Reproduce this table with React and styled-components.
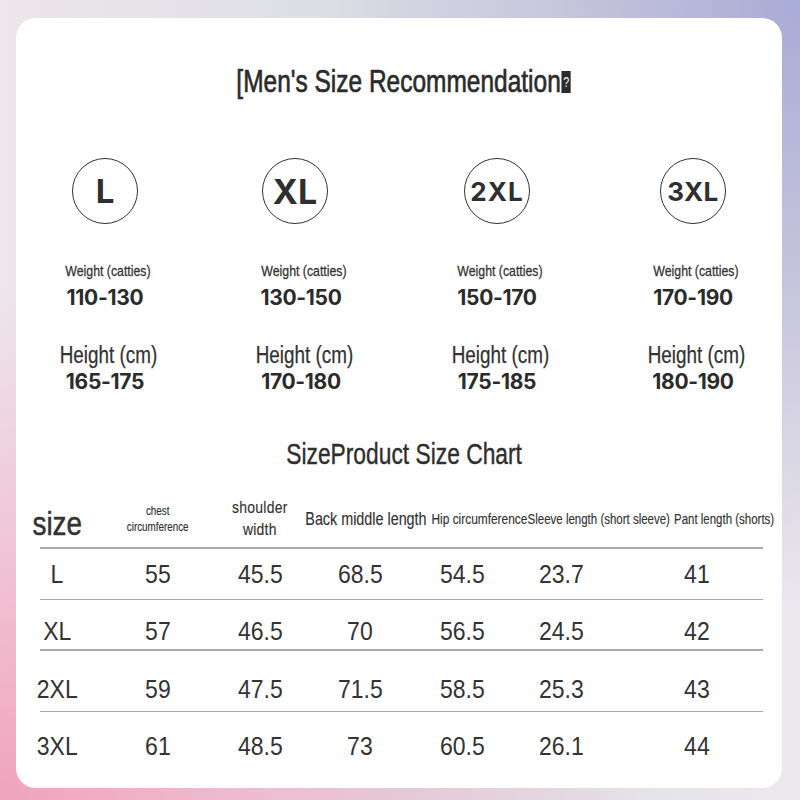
import React from "react";
import styled, { createGlobalStyle } from "styled-components";

const NARROW = `"Liberation Sans", Arial, sans-serif`;

const GlobalStyle = createGlobalStyle`
  html, body { margin: 0; padding: 0; }
  body { width: 800px; height: 800px; overflow: hidden; font-family: "Liberation Sans", Arial, sans-serif; }
`;

const Page = styled.div`
  width: 800px;
  height: 800px;
  box-sizing: border-box;
  padding: 18px 18px 12px 16px;
  background:
    radial-gradient(110% 85% at 0% 100%, #f0a3bd 0%, rgba(242, 178, 200, 0.75) 30%, rgba(242, 210, 222, 0) 75%),
    radial-gradient(70% 90% at 100% 0%, #a8abd6 0%, rgba(190, 188, 216, 0.8) 40%, rgba(215, 214, 228, 0) 85%),
    linear-gradient(90deg, #ede6eb 0%, #d9dde4 50%, #ece8ee 100%);
`;

const Card = styled.div`
  height: 100%;
  box-sizing: border-box;
  background: #fff;
  border-radius: 20px;
  padding-top: 44px;
  display: flex;
  flex-direction: column;
  align-items: center;
  color: #2f2f2f;
`;

const Title = styled.h1`
  margin: 0 0 0 10px;
  font-family: ${NARROW};
  font-weight: 400;
  font-size: 32px;
  line-height: 38px;
  color: #2b2b2b;
  white-space: nowrap;
  -webkit-text-stroke: 0.7px #2b2b2b;
  transform: scaleX(0.765);
`;

const Tofu = styled.span`
  display: inline-block;
  width: 12px;
  height: 22px;
  margin-left: 1px;
  background: #2b2b2b;
  color: #fff;
  font-size: 14px;
  line-height: 22px;
  text-align: center;
  vertical-align: 5px;
  -webkit-text-stroke: 0;
`;

const SizeGrid = styled.div`
  margin-top: 58px;
  display: grid;
  grid-template-columns: repeat(4, 196px);
`;

const SizeCol = styled.div`
  display: flex;
  flex-direction: column;
  align-items: center;
`;

const Circle = styled.div`
  width: 66px;
  height: 66px;
  box-sizing: border-box;
  margin-right: ${(p) => p.$dx || 0}px;
  border: 1.5px solid #333;
  border-radius: 50%;
  display: flex;
  align-items: center;
  justify-content: center;
  font-family: Inter, "Liberation Sans", sans-serif;
  font-weight: 700;
  font-size: ${(p) => p.$size}px;
  letter-spacing: ${(p) => p.$track}px;
  color: #2f2f2f;
`;

const SmallLabel = styled.div`
  margin-top: 38px;
  margin-left: 5px;
  font-family: ${NARROW};
  font-size: 15px;
  line-height: 18px;
  color: #353535;
  white-space: nowrap;
  -webkit-text-stroke: 0.3px #353535;
  transform: scaleX(0.82);
`;

const BigLabel = styled.div`
  margin-top: 33px;
  margin-left: 6px;
  font-family: ${NARROW};
  font-size: 23px;
  line-height: 24px;
  color: #333;
  white-space: nowrap;
  -webkit-text-stroke: 0.25px #333;
  transform: scaleX(0.82);
`;

const RangeValue = styled.div`
  margin-top: ${(p) => p.$gap}px;
  font-family: Inter, "Liberation Sans", sans-serif;
  font-weight: 700;
  font-size: 21px;
  line-height: 24px;
  letter-spacing: -0.3px;
  color: #2b2b2b;
  white-space: nowrap;
`;

const ChartTitle = styled.h2`
  margin: 43px 0 0 10px;
  font-family: ${NARROW};
  font-weight: 400;
  font-size: 30px;
  line-height: 34px;
  color: #2e2e2e;
  white-space: nowrap;
  -webkit-text-stroke: 0.4px #2e2e2e;
  transform: scaleX(0.76);
`;

const Table = styled.div`
  align-self: stretch;
  margin-top: 26px;
  display: flex;
  flex-direction: column;
`;

const HeaderRow = styled.div`
  height: 50px;
  box-sizing: border-box;
  padding-bottom: 10px;
  display: grid;
  grid-template-columns: 82px 120px 84px 128px 98px 142px 108px;
  align-items: center;
  justify-items: center;
  font-family: ${NARROW};
  color: #333;
`;

const HeadCell = styled.div`
  font-size: ${(p) => p.$size}px;
  line-height: ${(p) => p.$lh}px;
  margin-top: ${(p) => p.$shift || 0}px;
  text-align: center;
  white-space: nowrap;
  letter-spacing: ${(p) => p.$track || 0}px;
  -webkit-text-stroke: ${(p) => p.$stroke || 0.15}px #333;
  transform: scaleX(0.82);
`;

const Rule = styled.div`
  height: 1.5px;
  margin: 0 19px 0 24px;
  background: #ababab;
`;

const DataRow = styled.div`
  height: ${(p) => p.$h}px;
  box-sizing: border-box;
  padding-top: ${(p) => p.$pt}px;
  display: grid;
  grid-template-columns: 82px 120px 84px 116px 88px 110px 162px;
  align-items: center;
  justify-items: center;
  font-family: "Liberation Sans", Arial, sans-serif;
  font-size: 25px;
  line-height: 28px;
  color: #333;
`;

const Cell = styled.span`
  display: inline-block;
  transform: scaleX(0.92);
`;

const sizes = [
  { label: "L", size: 33, track: 0, dx: 0, w: "110-130", h: "165-175" },
  { label: "XL", size: 34, track: 0, dx: 12, w: "130-150", h: "170-180" },
  { label: "2XL", size: 26, track: 1, dx: 0, w: "150-170", h: "175-185" },
  { label: "3XL", size: 26, track: 0.5, dx: 0, w: "170-190", h: "180-190" },
];

const rows = [
  { h: 50, pt: 0, cells: ["L", "55", "45.5", "68.5", "54.5", "23.7", "41"] },
  { h: 49, pt: 13, cells: ["XL", "57", "46.5", "70", "56.5", "24.5", "42"] },
  { h: 60, pt: 16, cells: ["2XL", "59", "47.5", "71.5", "58.5", "25.3", "43"] },
  { h: 68, pt: 0, cells: ["3XL", "61", "48.5", "73", "60.5", "26.1", "44"] },
];

export default function App() {
  return (
    <>
      <GlobalStyle />
      <Page>
        <Card>
          <Title>
            [Men's Size Recommendation<Tofu>?</Tofu>
          </Title>
          <SizeGrid>
            {sizes.map((s) => (
              <SizeCol key={s.label}>
                <Circle $size={s.size} $track={s.track} $dx={s.dx}>{s.label}</Circle>
                <SmallLabel>Weight (catties)</SmallLabel>
                <RangeValue $gap={6}>{s.w}</RangeValue>
                <BigLabel>Height (cm)</BigLabel>
                <RangeValue $gap={3}>{s.h}</RangeValue>
              </SizeCol>
            ))}
          </SizeGrid>
          <ChartTitle>SizeProduct Size Chart</ChartTitle>
          <Table>
            <HeaderRow>
              <HeadCell $size={34} $lh={36} $shift={8} $stroke={0.5}>size</HeadCell>
              <HeadCell $size={12} $lh={16}>chest<br />circumference</HeadCell>
              <HeadCell $size={17} $lh={22} $track={0.3}>shoulder<br />width</HeadCell>
              <HeadCell $size={17.5} $lh={20}>Back middle length</HeadCell>
              <HeadCell $size={14.5} $lh={18}>Hip circumference</HeadCell>
              <HeadCell $size={14} $lh={18}>Sleeve length (short sleeve)</HeadCell>
              <HeadCell $size={14} $lh={18}>Pant length (shorts)</HeadCell>
            </HeaderRow>
            {rows.map((r) => (
              <React.Fragment key={r.cells[0]}>
                <Rule />
                <DataRow $h={r.h} $pt={r.pt}>
                  {r.cells.map((c, i) => (
                    <Cell key={i}>{c}</Cell>
                  ))}
                </DataRow>
              </React.Fragment>
            ))}
          </Table>
        </Card>
      </Page>
    </>
  );
}
